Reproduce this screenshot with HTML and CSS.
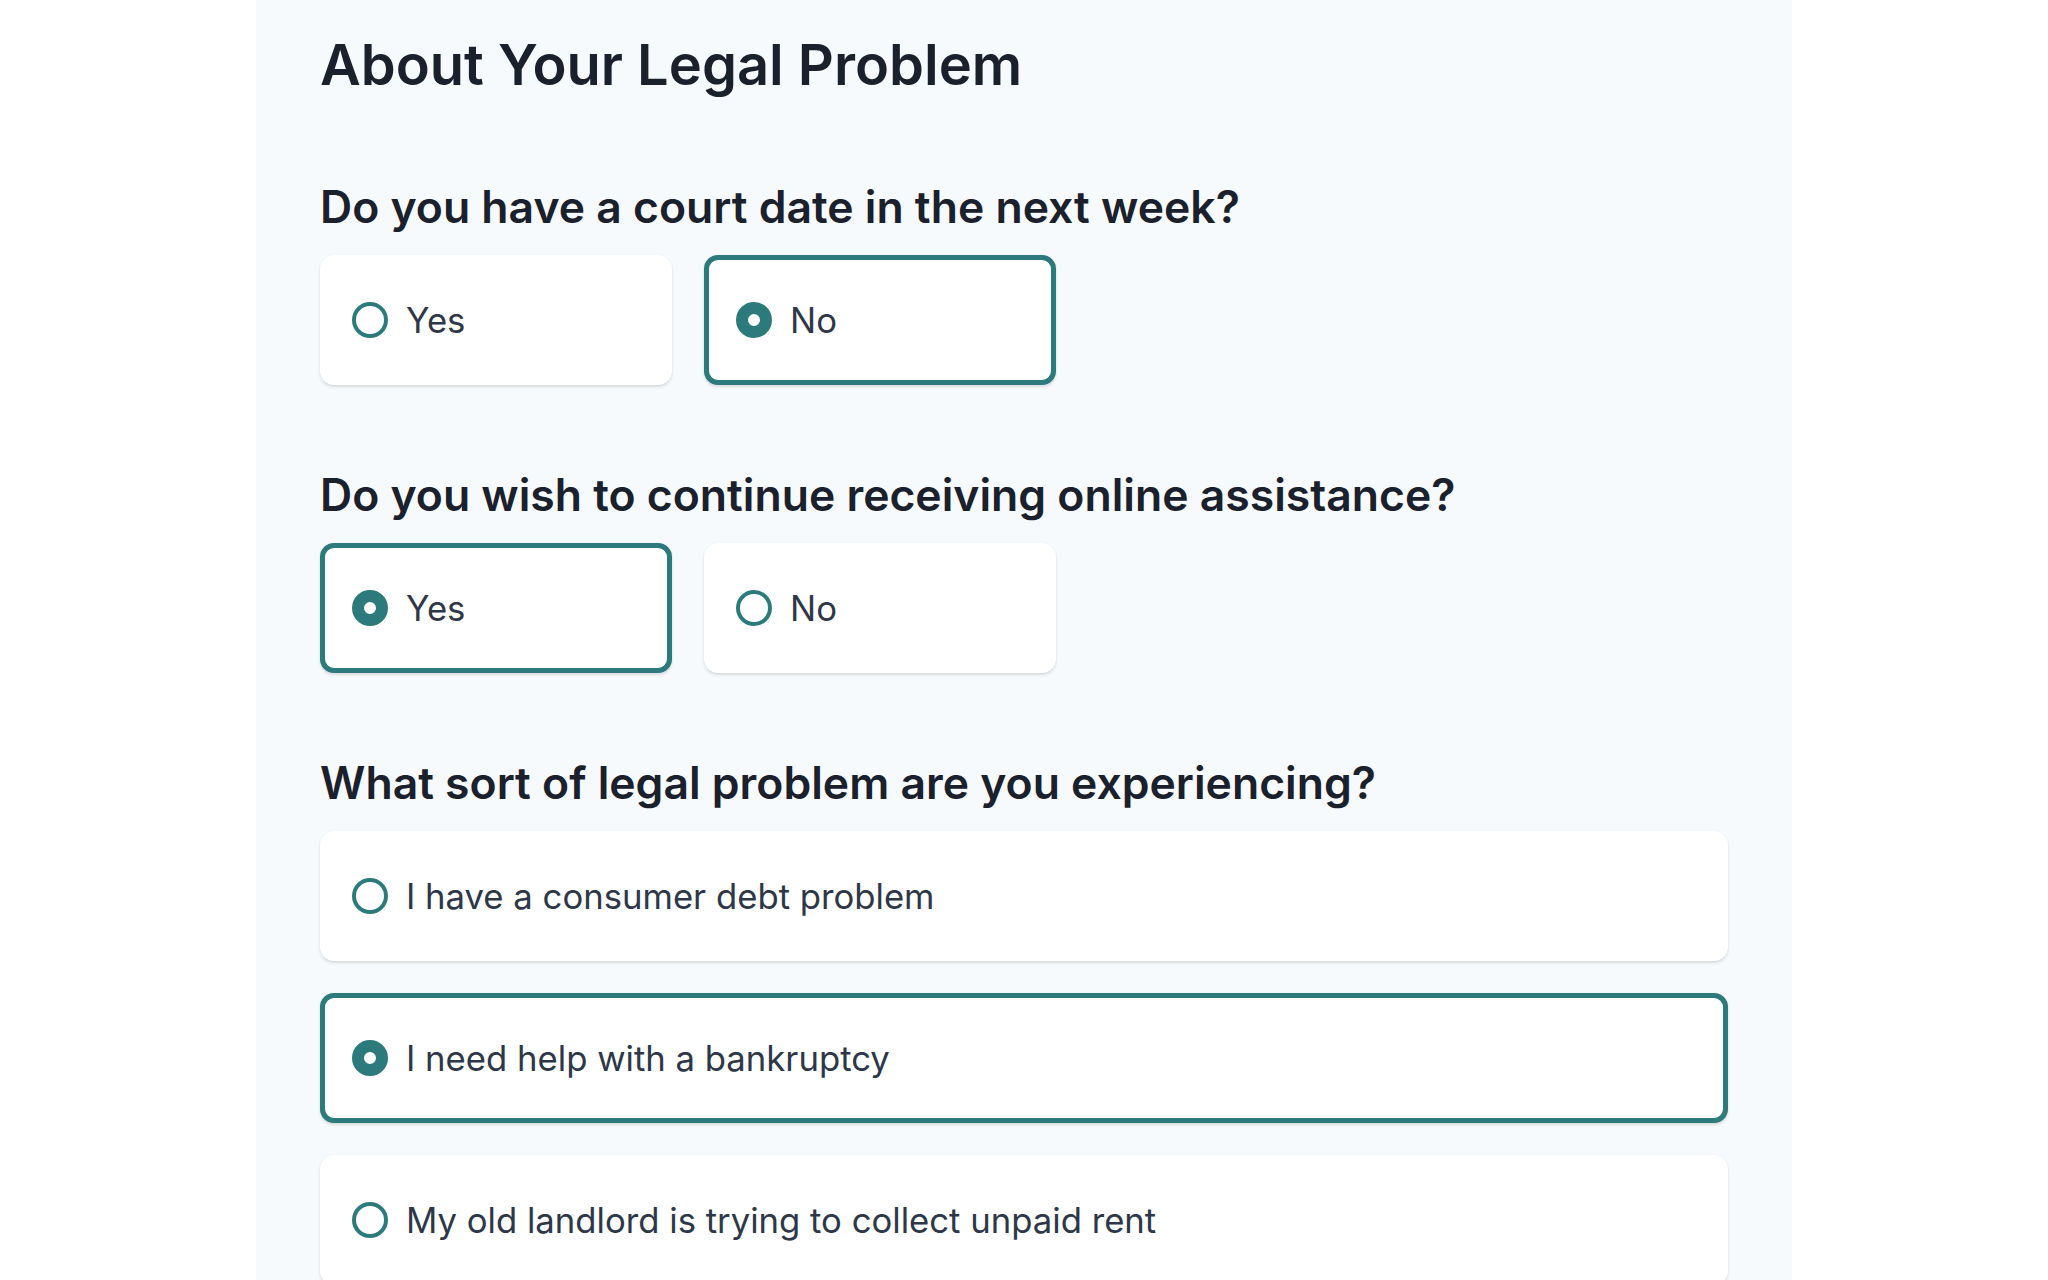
FILE: index.html
```html
<!DOCTYPE html>
<html lang="en">
<head>
<meta charset="utf-8">
<title>About Your Legal Problem</title>
<link rel="stylesheet" href="styles.css">
</head>
<body>
<main class="panel">
  <h1 class="title">About Your Legal Problem</h1>

  <section class="question">
    <h2 class="question-title">Do you have a court date in the next week?</h2>
    <div class="options options-inline">
      <label class="option"><span class="radio"></span><span class="option-text">Yes</span></label>
      <label class="option is-selected"><span class="radio"></span><span class="option-text">No</span></label>
    </div>
  </section>

  <section class="question">
    <h2 class="question-title">Do you wish to continue receiving online assistance?</h2>
    <div class="options options-inline">
      <label class="option is-selected"><span class="radio"></span><span class="option-text">Yes</span></label>
      <label class="option"><span class="radio"></span><span class="option-text">No</span></label>
    </div>
  </section>

  <section class="question">
    <h2 class="question-title">What sort of legal problem are you experiencing?</h2>
    <div class="options options-stacked">
      <label class="option"><span class="radio"></span><span class="option-text">I have a consumer debt problem</span></label>
      <label class="option is-selected"><span class="radio"></span><span class="option-text">I need help with a bankruptcy</span></label>
      <label class="option"><span class="radio"></span><span class="option-text">My old landlord is trying to collect unpaid rent</span></label>
    </div>
  </section>
</main>
</body>
</html>
```
FILE: styles.css
```css
html, body {
  margin: 0;
  padding: 0;
  background: #ffffff;
  font-family: Inter, "Noto Sans", "Liberation Sans", sans-serif;
  color: #1a202c;
}

.panel {
  max-width: 1536px;
  margin: 0 auto;
  min-height: 1280px;
  box-sizing: border-box;
  background: #f7fafc;
  padding: 33px 64px 0;
}

.title {
  margin: 0;
  font-size: 56px;
  line-height: 64px;
  font-weight: 600;
  color: #1a202c;
}

.question {
  margin-top: 82px;
}

.question-title {
  margin: 0 0 20px;
  font-size: 44.5px;
  line-height: 56px;
  font-weight: 600;
  color: #1a202c;
}

.options {
  display: flex;
  gap: 32px;
}

.options-inline .option {
  width: 352px;
}

.options-stacked {
  flex-direction: column;
}

.option {
  box-sizing: border-box;
  display: flex;
  align-items: center;
  gap: 18px;
  height: 130px;
  padding: 0 27px;
  background: #ffffff;
  border: 5px solid transparent;
  border-radius: 14px;
  box-shadow: 0 2px 3px rgba(0, 0, 0, 0.12), 0 0 2px rgba(0, 0, 0, 0.04);
  cursor: pointer;
}

.option.is-selected {
  border-color: #2c7a7b;
}

.radio {
  flex: none;
  box-sizing: border-box;
  width: 36px;
  height: 36px;
  border-radius: 50%;
  border: 4px solid #2c7a7b;
  background: #ffffff;
}

.is-selected .radio {
  border-width: 12px;
}

.option-text {
  font-size: 34.7px;
  line-height: 40px;
  color: #2d3748;
}
```
